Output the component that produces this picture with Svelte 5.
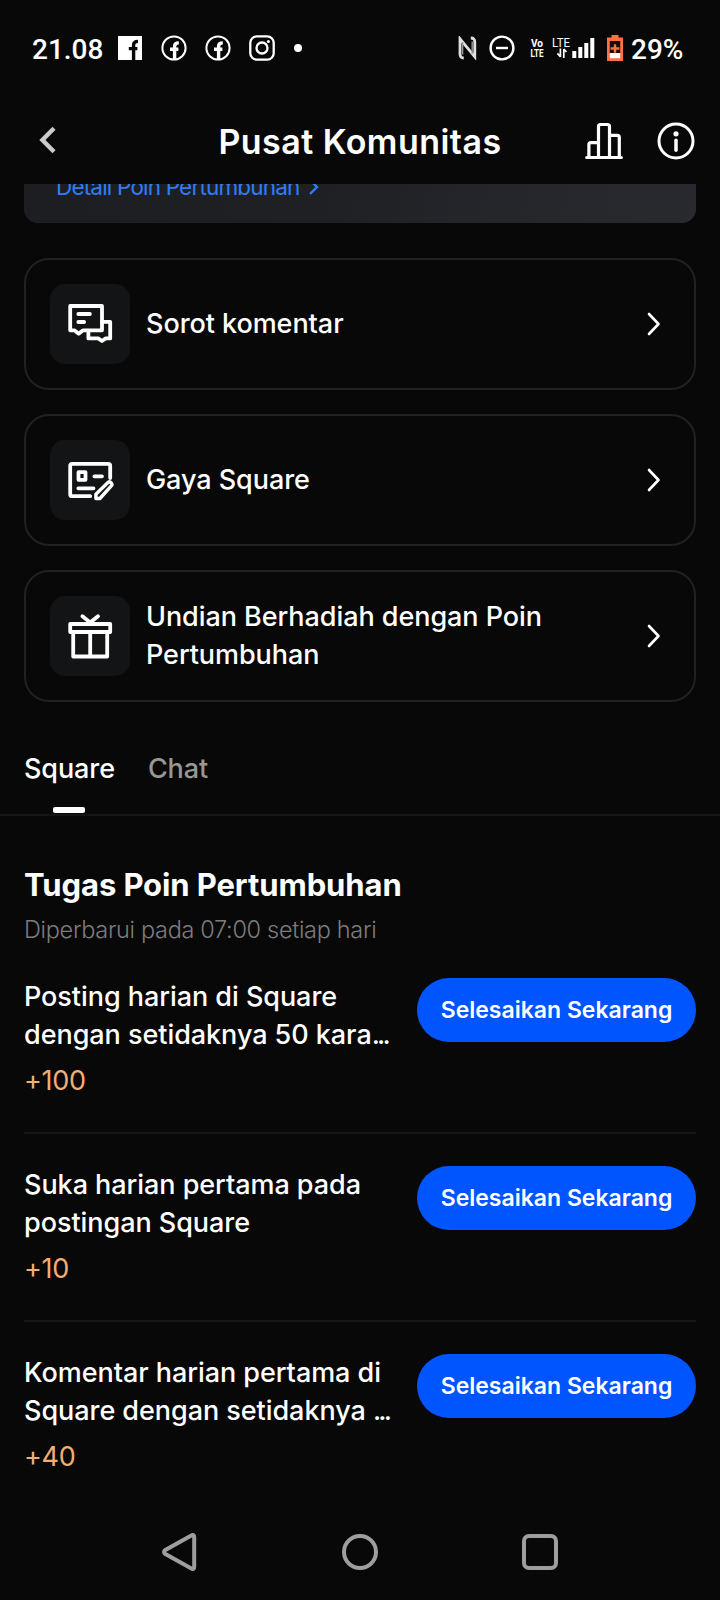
<script lang="ts">
  const menus = [
    { icon: "comments", label: "Sorot komentar" },
    { icon: "style", label: "Gaya Square" },
    { icon: "gift", label: "Undian Berhadiah dengan Poin Pertumbuhan" },
  ];

  const tasks = [
    { lines: ["Posting harian di Square", "dengan setidaknya 50 kara"], cut: true, points: 100 },
    { lines: ["Suka harian pertama pada", "postingan Square"], cut: false, points: 10 },
    { lines: ["Komentar harian pertama di", "Square dengan setidaknya "], cut: true, points: 40 },
  ];

  const tabs = ["Square", "Chat"];
  let active = $state("Square");
</script>

<main>
  <div class="status">
    <span class="clock">21.08</span>
    <svg class="fb-square" width="24" height="24" viewBox="0 0 24 24">
      <path d="M0 0h24v24H0z" fill="#fff" />
      <path d="M15.6 24V9.2q0-3.8 4.4-3.8M10.8 12.6h8.6" stroke="#080808" stroke-width="3.4" fill="none" />
    </svg>
    {#each [1, 2] as n (n)}
      <svg class="fb-round" width="26" height="26" viewBox="0 0 26 26" fill="none" stroke="#fff">
        <circle cx="13" cy="13" r="11.6" stroke-width="2" />
        <path d="M13.6 24.5V11.2q0-3.3 4.2-3.3M9 14.2h8.4" stroke-width="3.4" />
      </svg>
    {/each}
    <svg class="insta" width="26" height="26" viewBox="0 0 26 26" fill="none" stroke="#fff" stroke-width="2.3">
      <rect x="1.3" y="1.3" width="23.4" height="23.4" rx="6.5" />
      <circle cx="13" cy="13" r="5.5" />
      <circle cx="19.4" cy="6.6" r="1.5" fill="#fff" stroke="none" />
    </svg>
    <i class="dot"></i>

    <svg class="nfc" width="19" height="24" viewBox="0 0 19 24" fill="none" stroke="#e0e0e0" stroke-width="2.8">
      <path d="M5.8 22Q2 22 2 18V2.8L16.8 20.8V6q0-4-4-4" />
      <path d="M4.6 6v12.500M14.200 5.500V18" stroke="#9a9a9a" stroke-width="1.400" />
    </svg>
    <svg class="dnd" width="26" height="26" viewBox="0 0 26 26" fill="none" stroke="#fff" stroke-width="2.4">
      <circle cx="13" cy="13" r="11.4" />
      <path d="M7 13h12" />
    </svg>
    <svg class="volte" width="14" height="20" viewBox="0 0 14 20">
      <text x="1" y="9" textLength="12" lengthAdjust="spacingAndGlyphs">Vo</text>
      <text x="0.5" y="18.5" textLength="13" lengthAdjust="spacingAndGlyphs">LTE</text>
    </svg>
    <svg class="signal" width="44" height="24" viewBox="0 0 44 24">
      <text x="0" y="11.4" textLength="18" lengthAdjust="spacingAndGlyphs">LTE</text>
      <path d="M8.4 12.5v8.5M5.400 17.400l3 3.200M11.800 22v-9M14.400 16l-2.600-3" stroke="#fff" stroke-width="1.700" fill="none" />
      <path d="M20.300 15h4v7h-4zM26.300 11h4v11h-4zM32.300 7h4v15h-4zM38.300 2h4v20h-4z" fill="#fff" />
    </svg>
    <svg class="battery" width="16" height="26" viewBox="0 0 16 26">
      <path d="M4.500 0h7v2.500H16V26H0V2.500h4.500z" fill="#ff7044" />
      <path d="M2.800 6h10.400v12.400H2.800z" fill="#170b07" />
      <path d="M2.800 18h10.400v5.200H2.800z" fill="#fff" />
      <path d="M8 9.200v8.600M3.600 13.500h8.800" stroke="#ff7044" stroke-width="2.400" />
    </svg>
    <span class="percent">29%</span>
  </div>

  <header>
    <button class="back" aria-label="Kembali">
      <svg width="18" height="28" viewBox="0 0 18 28"><path d="M15 2.2 3.4 14 15 25.8" fill="none" stroke="#cbcbcb" stroke-width="4.4" /></svg>
    </button>
    <h1>Pusat Komunitas</h1>
    <div class="actions">
      <svg width="38" height="38" viewBox="0 0 38 38" fill="none" stroke="#fff" stroke-width="3.2" stroke-linecap="round" stroke-linejoin="round">
        <path d="M1.7 35.5h34.6M3.9 35V22.6q0-2 2-2h7.3M13.5 35V4.5q0-2 2-2h7q2 0 2 2V35M25 13.3h7.3q2 0 2 2V35" />
      </svg>
      <svg width="38" height="38" viewBox="0 0 38 38" fill="none" stroke="#fff" stroke-linecap="round">
        <circle cx="19" cy="19" r="17" stroke-width="3" />
        <path d="M19 18.3v9.9" stroke-width="3.5" />
        <circle cx="19" cy="11.8" r="2.6" fill="#fff" stroke="none" />
      </svg>
    </div>
  </header>

  <section class="growth">
    <a href="#detail">
      <span>Detail Poin Pertumbuhan</span>
      <svg width="12" height="18" viewBox="0 0 12 18"><path d="M2 2l7 7-7 7" fill="none" stroke="#2f7df6" stroke-width="2.4" /></svg>
    </a>
  </section>

  <section class="menus">
    {#each menus as menu (menu.icon)}
      <button class="menu">
        <span class="tile">
          <svg width="48" height="48" viewBox="0 0 48 48" fill="none" stroke="#fff" stroke-width="3.8" stroke-linecap="round" stroke-linejoin="round">
            {#if menu.icon === "comments"}
              <path d="M4.2 6H36v24.3H17.2l-4.5 3.3-4.5-3.3h-4z" />
              <path d="M12.3 14h11.6M12.3 22h5.8" />
              <path d="M36 21.8h8.2v16.6h-4.4L36 41l-3.8-2.6h-9.8V31" />
            {:else if menu.icon === "style"}
              <path d="M44.2 22V9.800q0-2-2-2h-36q-2 0-2 2v28.400q0 2 2 2h18" />
              <path d="M12.5 16.2h7v7.6h-7zM28.4 20.3h7.6M12.3 32.3h15.2" />
              <path d="M29.9 42.5v-4.3l12.3-11.9q1.2-1 2.3 0l1 1q1 1.2 0 2.3L33.900 42.500z" stroke-width="3.400" />
            {:else}
              <path d="M4.2 12h40v8h-40zM7.2 20.5v24h34v-24M24.2 20.5v23.5" />
              <path d="M16.4 4.3 24.2 10.6 32 4.3" />
            {/if}
          </svg>
        </span>
        <span class="label">{menu.label}</span>
        <svg width="14" height="24" viewBox="0 0 14 24"><path d="M2 2l9.5 10L2 22" fill="none" stroke="#fff" stroke-width="2.6" stroke-linecap="round" stroke-linejoin="round" /></svg>
      </button>
    {/each}
  </section>

  <nav class="tabs">
    {#each tabs as tab (tab)}
      <button class="tab" class:active={active === tab} onclick={() => (active = tab)}>{tab}</button>
    {/each}
  </nav>

  <section class="tasks">
    <h2>Tugas Poin Pertumbuhan</h2>
    <p class="updated">Diperbarui pada 07:00 setiap hari</p>
    {#each tasks as task (task.points)}
      <article>
        <div class="info">
          <p class="name">
            {task.lines[0]}<br />{task.lines[1]}{#if task.cut}<span class="dots">...</span>{/if}
          </p>
          <p class="points">+{task.points}</p>
        </div>
        <button class="finish">Selesaikan Sekarang</button>
      </article>
    {/each}
  </section>

  <footer>
    <svg width="38" height="40" viewBox="0 0 38 40"><path d="M31.800 3.200 5 18.200q-2 1.800 0 3.600l26.800 15q2.400 1 2.400-2V5.200q0-3-2.400-2z" /></svg>
    <svg width="36" height="36" viewBox="0 0 36 36"><circle cx="18" cy="18" r="16" /></svg>
    <svg width="36" height="36" viewBox="0 0 36 36"><rect x="2" y="2" width="32" height="32" rx="5" /></svg>
  </footer>
</main>

<style>
:global(body) {
  background: #080808;
}
main {
  width: 720px;
  height: 1600px;
  display: flex;
  flex-direction: column;
  overflow: hidden;
  background: #080808;
  color: #fff;
  font-family: Inter, "Liberation Sans", sans-serif;
}
main > * {
  flex: none;
}
svg {
  display: block;
  flex: none;
}
h1, h2, p {
  margin: 0;
}
button {
  padding: 0;
  border: none;
  background: none;
  color: inherit;
  font: inherit;
  letter-spacing: inherit;
  text-align: left;
}

.status {
  height: 96px;
  display: flex;
  align-items: center;
  padding: 0 38px 0 32px;
  font-family: Roboto, sans-serif;
  font-weight: 500;
  font-size: 28px;
}
.clock {
  width: 72px;
  padding-top: 2px;
}
.fb-square {
  margin-left: 14px;
}
.fb-round {
  margin-left: 18px;
}
.fb-square + .fb-round {
  margin-left: 19px;
}
.insta {
  margin-left: 18px;
}
.dot {
  width: 8px;
  height: 8px;
  margin-left: 19px;
  border-radius: 50%;
  background: #fff;
}
.nfc {
  margin-left: auto;
}
.dnd {
  margin-left: 12px;
}
.volte {
  margin-left: 15px;
}
.volte text {
  font-family: Roboto, sans-serif;
  font-size: 11px;
  font-weight: 700;
  fill: #fff;
}
.signal {
  margin-left: 8px;
}
.signal text {
  font-family: Roboto, sans-serif;
  font-size: 12px;
  font-weight: 400;
  fill: #fff;
}
.battery {
  margin-left: 11px;
}
.percent {
  width: 51px;
  margin-left: 8px;
  padding-top: 2px;
}

header {
  height: 88px;
  box-sizing: border-box;
  display: grid;
  grid-template-columns: 119px 1fr 119px;
  align-items: center;
  padding: 2px 25px 0;
}
.back {
  padding: 0 0 2px 14px;
}
h1 {
  padding-top: 2px;
  text-align: center;
  font-size: 34px;
  font-weight: 600;
  letter-spacing: 0.45px;
  line-height: 44px;
  white-space: nowrap;
}
.actions {
  display: flex;
  justify-content: flex-end;
  gap: 34px;
}

.growth {
  height: 39px;
  display: flex;
  align-items: flex-end;
  margin: 0 24px;
  overflow: hidden;
  border-radius: 0 0 14px 14px;
  background: linear-gradient(100deg, #1d1e21 0%, #1f2023 45%, #24252a 65%, #292a2f 100%);
}
.growth a {
  display: flex;
  align-items: center;
  gap: 8px;
  padding: 0 0 19px 32px;
  color: #2f7df6;
  font-size: 22.5px;
  letter-spacing: -0.82px;
  line-height: 34px;
  text-decoration: none;
}

.menus {
  display: flex;
  flex-direction: column;
  gap: 24px;
  padding: 35px 24px 0;
}
.menu {
  height: 132px;
  box-sizing: border-box;
  display: flex;
  align-items: center;
  gap: 16px;
  padding: 0 33px 0 24px;
  border: 2px solid #212121;
  border-radius: 25px;
}
.tile {
  width: 80px;
  height: 80px;
  flex: none;
  display: grid;
  place-items: center;
  border-radius: 15px;
  background: #121415;
}
.label {
  flex: 1;
  padding-right: 80px;
  font-size: 27px;
  font-weight: 500;
  letter-spacing: -0.06px;
  line-height: 38px;
}

.tabs {
  height: 114px;
  box-sizing: border-box;
  display: flex;
  align-items: flex-end;
  gap: 33px;
  padding: 0 24px;
  border-bottom: 2px solid #151515;
}
.tab {
  position: relative;
  padding-bottom: 26px;
  color: #979797;
  font-size: 27px;
  font-weight: 500;
  letter-spacing: -0.1px;
  line-height: 38px;
}
.tab.active {
  color: #fff;
}
.tab.active::after {
  content: "";
  position: absolute;
  left: 50%;
  bottom: 1px;
  width: 32px;
  height: 6px;
  margin-left: -16px;
  border-radius: 2px;
  background: #fff;
}

.tasks {
  padding: 48px 24px 0;
}
h2 {
  font-size: 31px;
  font-weight: 700;
  letter-spacing: -0.1px;
  line-height: 42px;
}
.updated {
  margin-top: 7px;
  padding-bottom: 1px;
  color: #7c7c7c;
  font-size: 23.5px;
  font-weight: 300;
  letter-spacing: -0.32px;
  line-height: 34px;
}
article {
  height: 188px;
  box-sizing: border-box;
  display: flex;
  justify-content: space-between;
  align-items: flex-start;
  padding-top: 32px;
  border-bottom: 2px solid #151515;
}
.updated + article {
  height: 186px;
  padding-top: 30px;
}
article:last-child {
  height: auto;
  border-bottom: none;
}
.name {
  font-size: 27px;
  font-weight: 500;
  letter-spacing: -0.05px;
  line-height: 38px;
  white-space: nowrap;
}
.dots {
  letter-spacing: -2.8px;
}
.points {
  margin-top: 8px;
  color: #f5ad73;
  font-size: 27px;
  letter-spacing: -0.3px;
  line-height: 38px;
}
.finish {
  width: 279px;
  height: 64px;
  flex: none;
  border-radius: 32px;
  background: #0055ff;
  font-size: 23px;
  font-weight: 600;
  text-align: center;
  white-space: nowrap;
}

footer {
  height: 96px;
  margin-top: auto;
  display: flex;
  align-items: center;
  justify-content: center;
  gap: 144px;
  padding-right: 2px;
}
footer path, footer circle, footer rect {
  fill: none;
  stroke: #9e9e9e;
  stroke-width: 4;
}
</style>
